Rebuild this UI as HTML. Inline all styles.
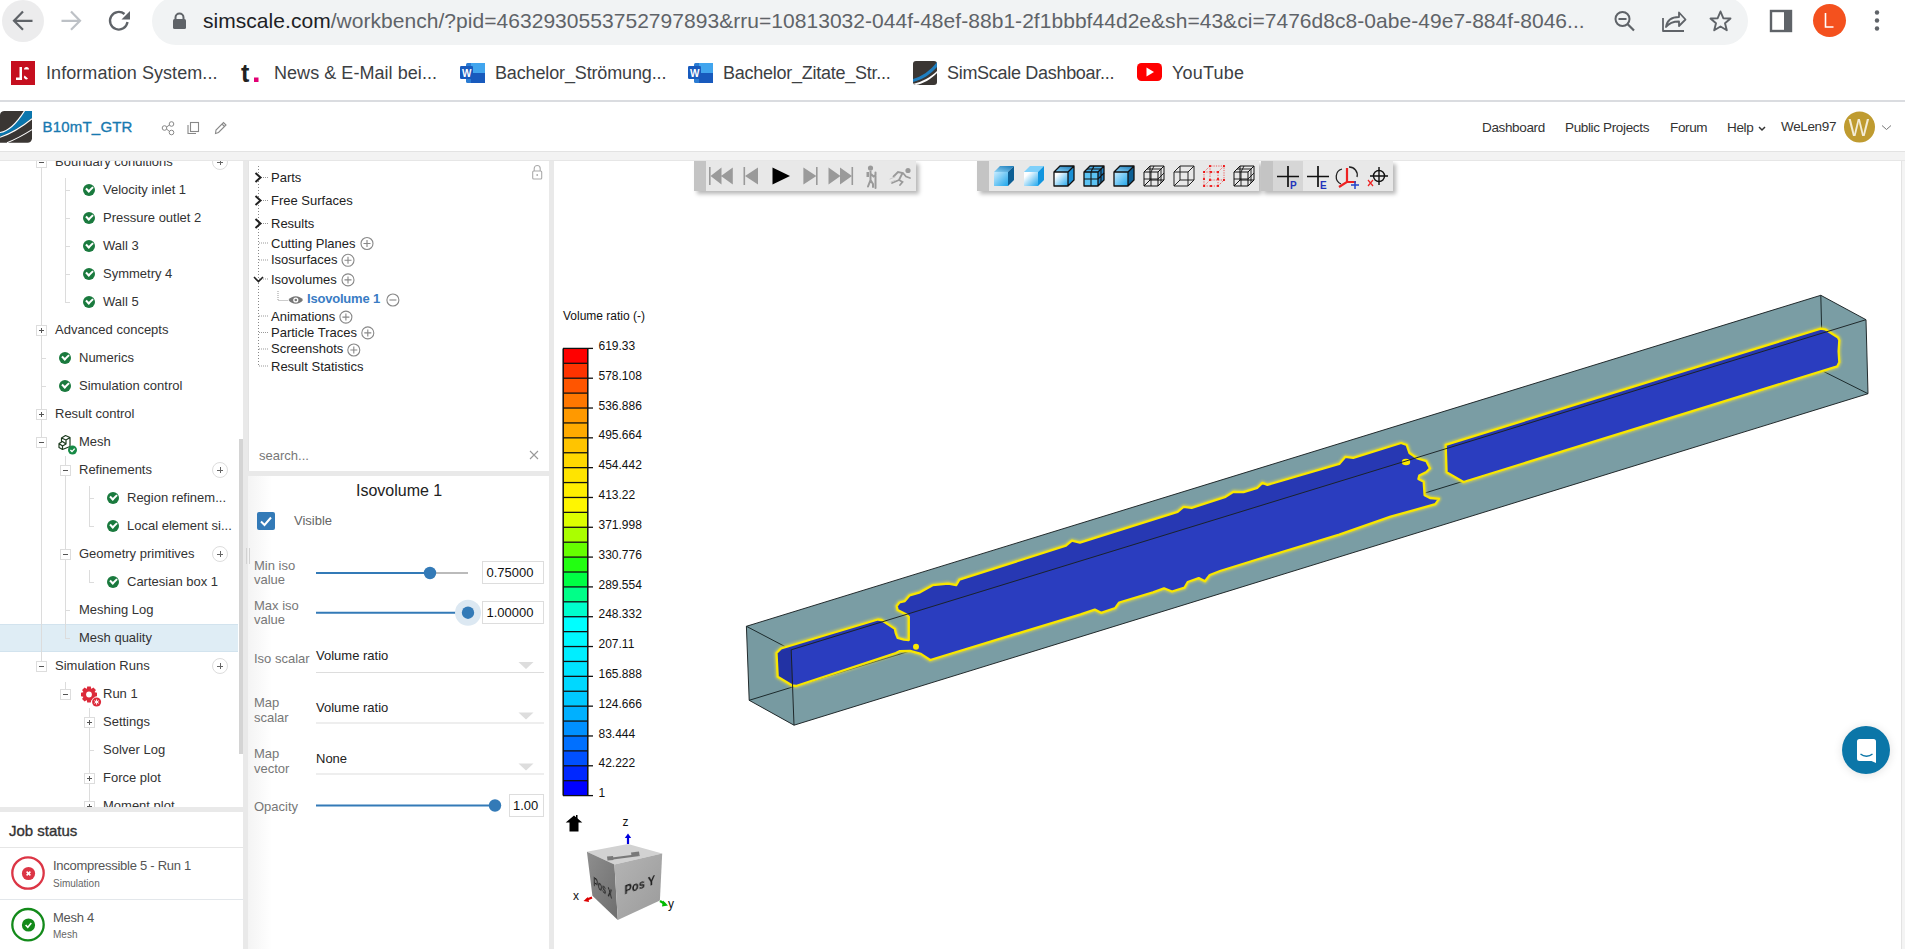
<!DOCTYPE html>
<html><head><meta charset="utf-8">
<style>
*{box-sizing:border-box;margin:0;padding:0}
html,body{width:1905px;height:949px;overflow:hidden;background:#fff;font-family:"Liberation Sans",sans-serif;position:relative}
.a{position:absolute}
.t{position:absolute;white-space:nowrap}
/* chrome */
#chrome{left:0;top:0;width:1905px;height:102px;background:#fff;border-bottom:2px solid #dadce0;z-index:2}
.omni{left:152px;top:-3px;width:1596px;height:48px;border-radius:24px;background:#f1f3f4}
.bm{font-size:18px;color:#3c4043;top:63px;letter-spacing:-0.3px}
/* simscale header */
#hdr{left:0;top:101px;width:1905px;height:51px;background:#fff;border-bottom:1px solid #e3e3e3}
.nav{font-size:13.5px;color:#333;top:19px;letter-spacing:-0.35px}
/* panels */
#gray{left:0;top:152px;width:1905px;height:797px;background:#e9e9e9}
.panel{background:#fff}
.tr{font-size:13px;color:#333;letter-spacing:0px}
.ck{width:12px;height:12px;border-radius:50%;background:#1a7a3e}
.ck:after{content:"";position:absolute;left:3px;top:2.5px;width:5px;height:3px;border-left:2px solid #fff;border-bottom:2px solid #fff;transform:rotate(-45deg)}
.exp{width:11px;height:11px;border:1px solid #ddd;background:#fff}
.exp:before{content:"";position:absolute;left:2px;top:4px;width:5px;height:1px;background:#555}
.exp.p:after{content:"";position:absolute;left:4px;top:2px;width:1px;height:5px;background:#555}
.plus{width:16px;height:16px;border-radius:50%;border:1px solid #ddd;background:#fff}
.plus:before{content:"";position:absolute;left:4px;top:7px;width:6px;height:1px;background:#666}
.plus:after{content:"";position:absolute;left:7px;top:4px;width:1px;height:6px;background:#666}
.vl{width:1px;background:#dcdcdc}
.hl{height:1px;background:#dcdcdc}
.mt{font-size:13px;color:#222}
.lab{font-size:13px;color:#777;line-height:14.6px}
.lg{font-size:12px;color:#111}
</style></head><body>
<div id="chrome" class="a">
 <div class="a" style="left:2px;top:0px;width:42px;height:42px;border-radius:50%;background:#ececed"></div>
 <svg class="a" style="left:0;top:0" width="150" height="45">
  <path d="M32.5 20.8H15M23 11.5L14 20.8L23 29.8" fill="none" stroke="#5f6368" stroke-width="2.2"/>
  <path d="M61.5 20.8H79M71 11.5L80 20.8L71 29.8" fill="none" stroke="#bdc1c6" stroke-width="2.2"/>
  <path d="M127.5 22A8.8 8.8 0 1 1 124.5 14" fill="none" stroke="#5f6368" stroke-width="2.3"/>
  <path d="M130 11V19.5H121.5Z" fill="#5f6368"/>
 </svg>
 <div class="a omni"></div>
 <svg class="a" style="left:165px;top:10px" width="30" height="24">
  <path d="M10.5 9.5V7.5A4 4 0 0 1 18.5 7.5V9.5" fill="none" stroke="#5f6368" stroke-width="2"/>
  <rect x="8" y="9" width="13" height="10" rx="1.5" fill="#5f6368"/>
 </svg>
 <div class="t" style="left:203px;top:9px;font-size:21px;color:#5f6368;letter-spacing:0.04px"><span style="color:#202124">simscale.com</span>/workbench/?pid=4632930553752797893&amp;rru=10813032-044f-48ef-88b1-2f1bbbf44d2e&amp;sh=43&amp;ci=7476d8c8-0abe-49e7-884f-8046...</div>
 <svg class="a" style="left:1600px;top:0" width="305" height="45">
  <circle cx="22.5" cy="19" r="7" fill="none" stroke="#5f6368" stroke-width="2"/>
  <path d="M18.5 19H26.5M27.5 24L34 30.5" stroke="#5f6368" stroke-width="2.2" fill="none"/>
  <path d="M63 18V31H84M66 27C67 20 72 17 79 17V12.5L85.5 19.5L79 26V21.5C73 21.5 69 23 66 27Z" fill="none" stroke="#5f6368" stroke-width="1.8" stroke-linejoin="round"/>
  <path d="M120.5 11.5L123.3 18.2L130.5 18.5L125 23.3L126.8 30.3L120.5 26.5L114.2 30.3L116 23.3L110.5 18.5L117.7 18.2Z" fill="none" stroke="#5f6368" stroke-width="1.9" stroke-linejoin="round"/>
  <rect x="171" y="11" width="20" height="20" fill="none" stroke="#5f6368" stroke-width="2.4"/>
  <rect x="184" y="11" width="8" height="20" fill="#5f6368"/>
  <circle cx="229.5" cy="20.5" r="16.5" fill="#f4511e"/>
  <path d="M225.5 13V27H233.5" fill="none" stroke="#fff" stroke-width="1.6"/>
  <circle cx="277" cy="12.5" r="2.2" fill="#5f6368"/><circle cx="277" cy="20.5" r="2.2" fill="#5f6368"/><circle cx="277" cy="28.5" r="2.2" fill="#5f6368"/>
 </svg>
 <!-- bookmarks -->
 <svg class="a" style="left:0;top:55px" width="1260" height="40">
  <rect x="11" y="6" width="24" height="24" fill="#c50f1f"/>
  <path d="M16 25H22V12H19.5V22.5H16Z M24 14.5A2.5 2.5 0 0 1 29 14.5H24Z M24.5 20.5L28 23.5A2 2 0 0 1 24.5 20.5Z" fill="#fff"/>
  <text x="241" y="27" font-size="25" font-weight="bold" fill="#222" font-family="Liberation Sans">t</text>
  <rect x="254" y="22.5" width="4.5" height="4.5" fill="#e20074"/>
  <rect x="466" y="8" width="18" height="20" rx="1.5" fill="#2b7cd3"/>
  <rect x="471" y="8" width="14" height="10" fill="#41a5ee"/>
  <rect x="471" y="18" width="14" height="10" fill="#185abd"/>
  <rect x="460" y="11" width="13" height="13" rx="1.2" fill="#185abd"/>
  <text x="462" y="22" font-size="10" font-weight="bold" fill="#fff" font-family="Liberation Sans">W</text>
  <rect x="694" y="8" width="18" height="20" rx="1.5" fill="#2b7cd3"/>
  <rect x="699" y="8" width="14" height="10" fill="#41a5ee"/>
  <rect x="699" y="18" width="14" height="10" fill="#185abd"/>
  <rect x="688" y="11" width="13" height="13" rx="1.2" fill="#185abd"/>
  <text x="690" y="22" font-size="10" font-weight="bold" fill="#fff" font-family="Liberation Sans">W</text>
  <rect x="913" y="6" width="24" height="24" rx="3" fill="#3a3633"/>
  <path d="M913 24C921 22 930 16 937 7V12C931 19 922 25 913 27Z" fill="#1f7fc0"/>
  <path d="M913 29C922 27 931 22 937 16V18C931 24 923 29 916 30Z" fill="#fff"/>
  <rect x="1137" y="8" width="25" height="18" rx="4.5" fill="#ff0000"/>
  <path d="M1146.5 12.5L1154 17L1146.5 21.5Z" fill="#fff"/>
 </svg>
 <div class="t bm" style="left:46px;letter-spacing:0.07px">Information System...</div>
 <div class="t bm" style="left:274px;letter-spacing:0.05px">News &amp; E-Mail bei...</div>
 <div class="t bm" style="left:495px;letter-spacing:-0.14px">Bachelor_Strömung...</div>
 <div class="t bm" style="left:723px;letter-spacing:-0.25px">Bachelor_Zitate_Str...</div>
 <div class="t bm" style="left:947px">SimScale Dashboar...</div>
 <div class="t bm" style="left:1172px;letter-spacing:0.2px">YouTube</div>
</div>
<div id="hdr" class="a">
 <svg class="a" style="left:0;top:9px" width="34" height="34">
  <path d="M0 4.5Q0.5 0.9 4.5 0.9H32V28.2A4.5 4.5 0 0 1 27.5 32.7H0Z" fill="#3a3633"/>
  <path d="M24.7 0.9H32V7.9Q16 21 0 26.5V22.5Q11.9 20.9 24.7 0.9Z" fill="#0b76ad"/>
  <path d="M24.5 0.9Q11.9 20.9 0 22.5" fill="none" stroke="#fff" stroke-width="1.1"/>
  <path d="M32 8.7Q16 21.8 0 27.3" fill="none" stroke="#fff" stroke-width="1.1"/>
  <path d="M32 19.6Q19 27.9 7 32.7" fill="none" stroke="#fff" stroke-width="1.1"/>
 </svg>
 <div class="t" style="left:42.5px;top:17px;font-size:15px;color:#1879b0;letter-spacing:0.2px;-webkit-text-stroke:0.35px #1879b0">B10mT_GTR</div>
 <svg class="a" style="left:155px;top:15px" width="80" height="24">
  <circle cx="16.5" cy="8" r="2.3" fill="none" stroke="#888" stroke-width="1"/>
  <circle cx="9.5" cy="12" r="2.3" fill="none" stroke="#888" stroke-width="1"/>
  <circle cx="16.5" cy="16.5" r="2.3" fill="none" stroke="#888" stroke-width="1"/>
  <path d="M11.5 11L14.5 9M11.5 13L14.5 15.5" stroke="#888" stroke-width="1"/>
  <rect x="35.5" y="6.5" width="8" height="9" fill="none" stroke="#888" stroke-width="1.1"/>
  <path d="M33 9V17.5H41" fill="none" stroke="#888" stroke-width="1.1"/>
  <path d="M60.5 17.5L61 14L68.5 6.5L71 9L63.5 16.5Z M67 8L69.5 10.5" fill="none" stroke="#888" stroke-width="1.1"/>
 </svg>
 <div class="t nav" style="left:1482px">Dashboard</div>
 <div class="t nav" style="left:1565px">Public Projects</div>
 <div class="t nav" style="left:1670px">Forum</div>
 <div class="t nav" style="left:1727px">Help</div>
 <svg class="a" style="left:1755px;top:5px" width="150" height="40">
  <path d="M4 21L7 24L10 21" fill="none" stroke="#333" stroke-width="1.5"/>
  <circle cx="104.5" cy="21" r="15.5" fill="#bf9b30"/>
  <path d="M127 19.5L131.5 23.5L136 19.5" fill="none" stroke="#777" stroke-width="1"/>
 </svg>
 <div class="t nav" style="left:1781px;top:17.5px">WeLen97</div>
 <div class="t" style="left:1847.5px;top:14px;font-size:23px;color:#f3ecd6;transform:scaleX(0.95)">W</div>
</div>
<div id="gray" class="a"></div>
<!-- left panel -->
<div class="a panel" style="left:0;top:160px;width:243px;height:647px;overflow:hidden" id="lp">
<div class="a" style="left:0;top:463.5px;width:238px;height:28px;background:#dfedf5;border-top:1px solid #d2e3ee;border-bottom:1px solid #d2e3ee"></div>
<div class="a vl" style="left:41px;top:0.0px;height:500.5px"></div>
<div class="a vl" style="left:65px;top:17.5px;height:125.0px"></div>
<div class="a hl" style="left:65px;top:29.5px;width:5px"></div>
<div class="a hl" style="left:65px;top:57.5px;width:5px"></div>
<div class="a hl" style="left:65px;top:85.5px;width:5px"></div>
<div class="a hl" style="left:65px;top:113.5px;width:5px"></div>
<div class="a hl" style="left:65px;top:141.5px;width:5px"></div>
<div class="a hl" style="left:41px;top:197.5px;width:5px"></div>
<div class="a hl" style="left:41px;top:225.5px;width:5px"></div>
<div class="a vl" style="left:65px;top:295.5px;height:183.0px"></div>
<div class="a hl" style="left:65px;top:449.5px;width:5px"></div>
<div class="a hl" style="left:65px;top:477.5px;width:5px"></div>
<div class="a vl" style="left:89px;top:325.5px;height:41.0px"></div>
<div class="a hl" style="left:89px;top:337.5px;width:5px"></div>
<div class="a hl" style="left:89px;top:365.5px;width:5px"></div>
<div class="a vl" style="left:89px;top:409.5px;height:13.0px"></div>
<div class="a hl" style="left:89px;top:421.5px;width:5px"></div>
<div class="a vl" style="left:65px;top:521.5px;height:7.0px"></div>
<div class="a vl" style="left:89px;top:547.5px;height:112.5px"></div>
<div class="a hl" style="left:89px;top:589.5px;width:5px"></div>
<div class="a exp" style="left:36px;top:-3.3px"></div>
<div class="t tr" style="left:55px;top:-12.5px;line-height:28px">Boundary conditions</div>
<div class="a plus" style="left:211.5px;top:-6.0px"></div>
<div class="a ck" style="left:83px;top:23.5px"></div>
<div class="t tr" style="left:103px;top:15.5px;line-height:28px">Velocity inlet 1</div>
<div class="a ck" style="left:83px;top:51.5px"></div>
<div class="t tr" style="left:103px;top:43.5px;line-height:28px">Pressure outlet 2</div>
<div class="a ck" style="left:83px;top:79.5px"></div>
<div class="t tr" style="left:103px;top:71.5px;line-height:28px">Wall 3</div>
<div class="a ck" style="left:83px;top:107.5px"></div>
<div class="t tr" style="left:103px;top:99.5px;line-height:28px">Symmetry 4</div>
<div class="a ck" style="left:83px;top:135.5px"></div>
<div class="t tr" style="left:103px;top:127.5px;line-height:28px">Wall 5</div>
<div class="a exp p" style="left:36px;top:164.7px"></div>
<div class="t tr" style="left:55px;top:155.5px;line-height:28px">Advanced concepts</div>
<div class="a ck" style="left:59px;top:191.5px"></div>
<div class="t tr" style="left:79px;top:183.5px;line-height:28px">Numerics</div>
<div class="a ck" style="left:59px;top:219.5px"></div>
<div class="t tr" style="left:79px;top:211.5px;line-height:28px">Simulation control</div>
<div class="a exp p" style="left:36px;top:248.7px"></div>
<div class="t tr" style="left:55px;top:239.5px;line-height:28px">Result control</div>
<div class="a exp" style="left:36px;top:276.7px"></div>
<svg class="a" style="left:58px;top:269.5px" width="22" height="26"><path d="M3.5 8L7.5 5.5L12 7.5L8 10Z M3.5 8V12M8 10V14M12 7.5V16.5M1 13.5L4.5 11.5L8 14L4.5 16Z M1 13.5V17.5L4.5 19.5L12 16.5M4.5 16V19.5" fill="none" stroke="#1d3b1f" stroke-width="1.2" stroke-linejoin="round"/><circle cx="14.5" cy="20" r="4.5" fill="#168a45"/><path d="M12.4 20L14 21.6L16.7 18.6" fill="none" stroke="#fff" stroke-width="1.4"/></svg>
<div class="t tr" style="left:79px;top:267.5px;line-height:28px">Mesh</div>
<div class="a exp" style="left:60px;top:304.7px"></div>
<div class="t tr" style="left:79px;top:295.5px;line-height:28px">Refinements</div>
<div class="a plus" style="left:211.5px;top:302.0px"></div>
<div class="a ck" style="left:107px;top:331.5px"></div>
<div class="t tr" style="left:127px;top:323.5px;line-height:28px">Region refinem...</div>
<div class="a ck" style="left:107px;top:359.5px"></div>
<div class="t tr" style="left:127px;top:351.5px;line-height:28px">Local element si...</div>
<div class="a exp" style="left:60px;top:388.7px"></div>
<div class="t tr" style="left:79px;top:379.5px;line-height:28px">Geometry primitives</div>
<div class="a plus" style="left:211.5px;top:386.0px"></div>
<div class="a ck" style="left:107px;top:415.5px"></div>
<div class="t tr" style="left:127px;top:407.5px;line-height:28px">Cartesian box 1</div>
<div class="t tr" style="left:79px;top:435.5px;line-height:28px">Meshing Log</div>
<div class="t tr" style="left:79px;top:463.5px;line-height:28px">Mesh quality</div>
<div class="a exp" style="left:36px;top:500.7px"></div>
<div class="t tr" style="left:55px;top:491.5px;line-height:28px">Simulation Runs</div>
<div class="a plus" style="left:211.5px;top:498.0px"></div>
<div class="a exp" style="left:60px;top:528.7px"></div>
<svg class="a" style="left:78px;top:521.5px" width="30" height="28"><g transform="translate(11 12.5)"><path d="M5.80 -2.18 L8.00 -1.79 L8.00 1.79 L5.80 2.18 L5.65 2.56 L6.92 4.39 L4.39 6.92 L2.56 5.65 L2.18 5.80 L1.79 8.00 L-1.79 8.00 L-2.18 5.80 L-2.56 5.65 L-4.39 6.92 L-6.92 4.39 L-5.65 2.56 L-5.80 2.18 L-8.00 1.79 L-8.00 -1.79 L-5.80 -2.18 L-5.65 -2.56 L-6.92 -4.39 L-4.39 -6.92 L-2.56 -5.65 L-2.18 -5.80 L-1.79 -8.00 L1.79 -8.00 L2.18 -5.80 L2.56 -5.65 L4.39 -6.92 L6.92 -4.39 L5.65 -2.56Z" fill="#dc2a3a"/><circle r="2.9" fill="#fff"/></g><circle cx="18.6" cy="20" r="5.2" fill="#fff"/><circle cx="18.6" cy="20" r="4.5" fill="#dc2a3a"/><g transform="translate(18.6 20) rotate(90)"><path d="M2.60 0.00L-2.60 -0.00M1.30 2.25L-1.30 -2.25M-1.30 2.25L1.30 -2.25" stroke="#fff" stroke-width="1"/></g></svg>
<div class="t tr" style="left:103px;top:519.5px;line-height:28px">Run 1</div>
<div class="a exp p" style="left:84px;top:556.7px"></div>
<div class="t tr" style="left:103px;top:547.5px;line-height:28px">Settings</div>
<div class="t tr" style="left:103px;top:575.5px;line-height:28px">Solver Log</div>
<div class="a exp p" style="left:84px;top:612.7px"></div>
<div class="t tr" style="left:103px;top:603.5px;line-height:28px">Force plot</div>
<div class="a exp p" style="left:84px;top:640.7px"></div>
<div class="t tr" style="left:103px;top:631.5px;line-height:28px">Moment plot</div>
<div class="a" style="left:239px;top:279px;width:4px;height:315px;background:#d4d4d4"></div>
</div>
<div class="a panel" style="left:0;top:812px;width:243px;height:137px"></div>
<!-- middle -->
<div class="a panel" style="left:248px;top:160px;width:301px;height:311px"></div>
<div class="a panel" style="left:248px;top:476px;width:301px;height:473px"></div>
<!-- viewport -->
<div class="a panel" style="left:554px;top:160px;width:1347px;height:789px"></div>
<!-- job status -->
<div class="t" style="left:9px;top:822px;font-size:15px;color:#333;letter-spacing:0px;-webkit-text-stroke:0.35px #333">Job status</div>
<div class="a" style="left:0;top:847px;width:243px;height:1px;background:#e6e6e6"></div>
<div class="a" style="left:0;top:899px;width:243px;height:1px;background:#e3e7eb"></div>
<svg class="a" style="left:0;top:850px" width="50" height="99">
 <circle cx="28" cy="23" r="15.7" fill="none" stroke="#dc3545" stroke-width="2.3"/>
 <circle cx="28.5" cy="23.5" r="6.6" fill="#dc3545"/>
 <path d="M26.6 21.6L30.4 25.4M30.4 21.6L26.6 25.4" stroke="#fff" stroke-width="1.5"/>
 <circle cx="28" cy="74.7" r="15.7" fill="none" stroke="#138a1a" stroke-width="2.3"/>
 <circle cx="28.5" cy="75" r="6.6" fill="#138a1a"/>
 <path d="M25.6 75L27.8 77.2L31.3 73" fill="none" stroke="#fff" stroke-width="1.6"/>
</svg>
<div class="t" style="left:53px;top:858px;font-size:13px;color:#555;letter-spacing:-0.27px">Incompressible 5 - Run 1</div>
<div class="t" style="left:53px;top:878px;font-size:10px;color:#666">Simulation</div>
<div class="t" style="left:53px;top:910px;font-size:13px;color:#555;letter-spacing:-0.27px">Mesh 4</div>
<div class="t" style="left:53px;top:929px;font-size:10px;color:#666">Mesh</div>
<!-- middle tree -->
<div class="a" style="left:248px;top:160px;width:1px;height:311px;background:#e4e4e4"></div>
<svg class="a" style="left:248px;top:160px" width="301" height="311">
 <g stroke="#888" stroke-width="1" stroke-dasharray="1 2" fill="none">
  <path d="M10.5 6V207"/>
 </g>
 <g stroke="#999" stroke-width="1" stroke-dasharray="1 1" fill="none">
  <path d="M11 17.5H20M11 40.5H20M11 63.5H20M11 83H20M11 100H20M11 119H20M11 156H20M11 172.5H20M11 189H20M11 206H20"/>
  <path d="M30 131V140.5H40"/>
 </g>
 <path d="M7.5 13L12.5 17.5L7.5 22M7.5 36L12.5 40.5L7.5 45M7.5 59L12.5 63.5L7.5 68" fill="none" stroke="#222" stroke-width="2"/>
 <path d="M6 117L10.5 121.5L15 117" fill="none" stroke="#222" stroke-width="1.6"/>
 <g fill="none" stroke="#888" stroke-width="1.1">
  <circle cx="119" cy="83.5" r="6"/><path d="M115.5 83.5H122.5M119 80V87"/>
  <circle cx="100" cy="100.3" r="6"/><path d="M96.5 100.3H103.5M100 96.8V103.8"/>
  <circle cx="100" cy="119.9" r="6"/><path d="M96.5 119.9H103.5M100 116.4V123.4"/>
  <circle cx="144.9" cy="140" r="6"/><path d="M141.4 140H148.4"/>
  <circle cx="97.9" cy="157.1" r="6"/><path d="M94.4 157.1H101.4M97.9 153.6V160.6"/>
  <circle cx="119.8" cy="172.9" r="6"/><path d="M116.3 172.9H123.3M119.8 169.4V176.4"/>
  <circle cx="105.8" cy="190" r="6"/><path d="M102.3 190H109.3M105.8 186.5V193.5"/>
 </g>
 <path d="M40.5 140C44 135 51.5 135 55 140C51.5 145 44 145 40.5 140Z" fill="#777"/>
 <circle cx="47.8" cy="140" r="2.6" fill="#fff"/><circle cx="47.8" cy="140" r="1.3" fill="#777"/>
 <g fill="none" stroke="#aaa" stroke-width="1.1"><path d="M286.2 11V8.5A3 3 0 0 1 292.2 8.5V11"/><rect x="284.7" y="11" width="9" height="8" rx="1"/></g>
 <circle cx="289.2" cy="15" r="0.9" fill="#aaa"/>
 <path d="M282 291L290 299M290 291L282 299" stroke="#999" stroke-width="1.1"/>
</svg>
<div class="t mt" style="left:271px;top:170px">Parts</div>
<div class="t mt" style="left:271px;top:193px">Free Surfaces</div>
<div class="t mt" style="left:271px;top:216px">Results</div>
<div class="t mt" style="left:271px;top:235.5px">Cutting Planes</div>
<div class="t mt" style="left:271px;top:252.4px">Isosurfaces</div>
<div class="t mt" style="left:271px;top:271.6px">Isovolumes</div>
<div class="t mt" style="left:307px;top:291.4px;color:#3a7cc4;font-weight:bold;letter-spacing:-0.2px">Isovolume 1</div>
<div class="t mt" style="left:271px;top:308.5px">Animations</div>
<div class="t mt" style="left:271px;top:325px">Particle Traces</div>
<div class="t mt" style="left:271px;top:341.4px">Screenshots</div>
<div class="t mt" style="left:271px;top:358.5px">Result Statistics</div>
<div class="t" style="left:259px;top:447.5px;font-size:13px;color:#777">search...</div>
<!-- properties -->
<div class="a" style="left:248px;top:476px;width:24px;height:473px;background:linear-gradient(90deg,#f4f4f4,#fff)"></div>
<div class="a" style="left:246px;top:548px;width:1px;height:16px;background:#d2d2d2"></div><div class="a" style="left:249px;top:548px;width:1px;height:16px;background:#d2d2d2"></div>
<div class="t" style="left:356px;top:481.5px;font-size:16px;color:#222">Isovolume 1</div>
<div class="a" style="left:257px;top:512px;width:18px;height:18px;border-radius:2px;background:#337ab7"></div>
<svg class="a" style="left:257px;top:512px" width="18" height="18"><path d="M4 9.5L7.5 13L14 5.5" fill="none" stroke="#fff" stroke-width="2"/></svg>
<div class="t" style="left:294px;top:512.8px;font-size:13px;color:#666">Visible</div>
<div class="t lab" style="left:254px;top:558.8px">Min iso<br>value</div>
<div class="t lab" style="left:254px;top:598.6px">Max iso<br>value</div>
<div class="t lab" style="left:254px;top:651.8px">Iso scalar</div>
<div class="t lab" style="left:254px;top:696px">Map<br>scalar</div>
<div class="t lab" style="left:254px;top:747px">Map<br>vector</div>
<div class="t lab" style="left:254px;top:799.5px">Opacity</div>
<svg class="a" style="left:248px;top:476px" width="301" height="473">
 <path d="M68 97H182" stroke="#337ab7" stroke-width="2"/>
 <path d="M182 97H220" stroke="#bbb" stroke-width="2"/>
 <circle cx="182" cy="97" r="6.2" fill="#337ab7"/>
 <path d="M68 136.7H220" stroke="#337ab7" stroke-width="2"/>
 <circle cx="220" cy="136.7" r="13" fill="#dce8f2"/>
 <circle cx="220" cy="136.7" r="6.2" fill="#337ab7"/>
 <path d="M68 329.5H247" stroke="#337ab7" stroke-width="2"/>
 <circle cx="247" cy="329.5" r="6.2" fill="#337ab7"/>
 <rect x="234.5" y="85.5" width="61" height="22" fill="#fff" stroke="#ddd"/>
 <rect x="234.5" y="125.5" width="61" height="22" fill="#fff" stroke="#ddd"/>
 <rect x="261.5" y="318.5" width="34" height="22" fill="#fff" stroke="#ddd"/>
 <path d="M68 196.5H296M68 247H296M68 298H296" stroke="#ddd" stroke-width="1"/>
 <path d="M270.5 186H285.5L278 193Z M270.5 236.5H285.5L278 243.5Z M270.5 287.5H285.5L278 294.5Z" fill="#ddd"/>
</svg>
<div class="t" style="left:486.5px;top:564.7px;font-size:13px;color:#111">0.75000</div>
<div class="t" style="left:486.5px;top:604.8px;font-size:13px;color:#111">1.00000</div>
<div class="t" style="left:316px;top:648.3px;font-size:13px;color:#222">Volume ratio</div>
<div class="t" style="left:316px;top:699.5px;font-size:13px;color:#222">Volume ratio</div>
<div class="t" style="left:316px;top:750.7px;font-size:13px;color:#222">None</div>
<div class="t" style="left:513px;top:798px;font-size:13px;color:#111">1.00</div>
<!--TUBE-->
<svg class="a" style="left:0;top:0" width="1905" height="949">
<defs><filter id="gl" x="-5%" y="-5%" width="110%" height="110%"><feGaussianBlur stdDeviation="1.2"/></filter><clipPath id="cm"><path d="M776.5 653.0 L781.0 648.5 L877.9 619.5 L881.5 620.0 L894.9 628.9 L895.8 633.3 L897.6 637.8 L903.9 639.6 L908.8 640.0 L908.8 616.8 L906.6 614.5 L897.6 610.0 L896.7 606.0 L899.4 602.5 L904.8 601.1 L909.7 595.3 L920.0 592.3 L932.6 585.2 L948.3 583.6 L956.2 585.2 L959.4 579.7 L1065.9 545.7 L1071.9 540.7 L1079.9 542.7 L1177.6 511.8 L1183.6 506.8 L1191.6 507.8 L1225.5 496.8 L1233.5 491.8 L1243.5 492.2 L1257.4 487.8 L1262.4 482.9 L1267.4 484.9 L1339.2 463.9 L1345.2 456.9 L1353.2 457.9 L1401.1 443.0 L1406.7 445.0 L1409.4 453.0 L1417.5 458.5 L1426.4 461.2 L1430.0 468.4 L1426.4 472.0 L1419.3 475.5 L1418.4 479.0 L1423.7 481.8 L1424.6 495.2 L1430.0 498.0 L1439.0 498.8 L1435.4 504.2 L1390.6 516.7 L1339.2 534.7 L1255.4 560.0 L1220.0 571.0 L1209.8 575.0 L1205.0 581.3 L1198.7 578.1 L1187.7 582.0 L1184.6 587.6 L1172.0 591.5 L1164.0 588.3 L1153.0 592.3 L1119.2 602.5 L1115.3 608.0 L1101.1 612.8 L1094.8 609.6 L1080.6 614.3 L930.2 660.0 L920.9 653.9 L910.1 650.8 L899.4 651.2 L895.8 653.0 L796.0 686.0 L791.9 685.3 L777.7 676.8Z"/><path d="M1445.7 444.8 L1820.8 328.6 L1825.0 329.3 L1838.0 337.5 L1839.3 340.3 L1838.6 351.2 L1839.3 362.2 L1837.3 366.3 L1463.5 482.0 L1446.6 472.3Z"/></clipPath></defs>
<path d="M746.4 626.3 L1820.8 295.3 L1866.0 319.7 L1868.0 393.7 L794.0 725.2 L749.2 700.3Z" fill="#7a9da4"/>
<path d="M746.4 626.3 L791.2 649.8 L794.0 725.2 L749.2 700.3Z" fill="#6f9097" opacity="0.2"/>
<path d="M749.2 700.3L1822.7 371.0 M1820.8 295.3L1822.7 371.0 M1822.7 371.0L1868.0 393.7 M746.4 626.3L791.2 649.8" stroke="#1c2a2c" stroke-width="1" fill="none"/>
<path d="M776.5 653.0 L781.0 648.5 L877.9 619.5 L881.5 620.0 L894.9 628.9 L895.8 633.3 L897.6 637.8 L903.9 639.6 L908.8 640.0 L908.8 616.8 L906.6 614.5 L897.6 610.0 L896.7 606.0 L899.4 602.5 L904.8 601.1 L909.7 595.3 L920.0 592.3 L932.6 585.2 L948.3 583.6 L956.2 585.2 L959.4 579.7 L1065.9 545.7 L1071.9 540.7 L1079.9 542.7 L1177.6 511.8 L1183.6 506.8 L1191.6 507.8 L1225.5 496.8 L1233.5 491.8 L1243.5 492.2 L1257.4 487.8 L1262.4 482.9 L1267.4 484.9 L1339.2 463.9 L1345.2 456.9 L1353.2 457.9 L1401.1 443.0 L1406.7 445.0 L1409.4 453.0 L1417.5 458.5 L1426.4 461.2 L1430.0 468.4 L1426.4 472.0 L1419.3 475.5 L1418.4 479.0 L1423.7 481.8 L1424.6 495.2 L1430.0 498.0 L1439.0 498.8 L1435.4 504.2 L1390.6 516.7 L1339.2 534.7 L1255.4 560.0 L1220.0 571.0 L1209.8 575.0 L1205.0 581.3 L1198.7 578.1 L1187.7 582.0 L1184.6 587.6 L1172.0 591.5 L1164.0 588.3 L1153.0 592.3 L1119.2 602.5 L1115.3 608.0 L1101.1 612.8 L1094.8 609.6 L1080.6 614.3 L930.2 660.0 L920.9 653.9 L910.1 650.8 L899.4 651.2 L895.8 653.0 L796.0 686.0 L791.9 685.3 L777.7 676.8Z M1445.7 444.8 L1820.8 328.6 L1825.0 329.3 L1838.0 337.5 L1839.3 340.3 L1838.6 351.2 L1839.3 362.2 L1837.3 366.3 L1463.5 482.0 L1446.6 472.3Z" fill="none" stroke="#e8de40" stroke-width="4.5" stroke-linejoin="round" filter="url(#gl)" opacity="0.6"/>
<path d="M776.5 653.0 L781.0 648.5 L877.9 619.5 L881.5 620.0 L894.9 628.9 L895.8 633.3 L897.6 637.8 L903.9 639.6 L908.8 640.0 L908.8 616.8 L906.6 614.5 L897.6 610.0 L896.7 606.0 L899.4 602.5 L904.8 601.1 L909.7 595.3 L920.0 592.3 L932.6 585.2 L948.3 583.6 L956.2 585.2 L959.4 579.7 L1065.9 545.7 L1071.9 540.7 L1079.9 542.7 L1177.6 511.8 L1183.6 506.8 L1191.6 507.8 L1225.5 496.8 L1233.5 491.8 L1243.5 492.2 L1257.4 487.8 L1262.4 482.9 L1267.4 484.9 L1339.2 463.9 L1345.2 456.9 L1353.2 457.9 L1401.1 443.0 L1406.7 445.0 L1409.4 453.0 L1417.5 458.5 L1426.4 461.2 L1430.0 468.4 L1426.4 472.0 L1419.3 475.5 L1418.4 479.0 L1423.7 481.8 L1424.6 495.2 L1430.0 498.0 L1439.0 498.8 L1435.4 504.2 L1390.6 516.7 L1339.2 534.7 L1255.4 560.0 L1220.0 571.0 L1209.8 575.0 L1205.0 581.3 L1198.7 578.1 L1187.7 582.0 L1184.6 587.6 L1172.0 591.5 L1164.0 588.3 L1153.0 592.3 L1119.2 602.5 L1115.3 608.0 L1101.1 612.8 L1094.8 609.6 L1080.6 614.3 L930.2 660.0 L920.9 653.9 L910.1 650.8 L899.4 651.2 L895.8 653.0 L796.0 686.0 L791.9 685.3 L777.7 676.8Z M1445.7 444.8 L1820.8 328.6 L1825.0 329.3 L1838.0 337.5 L1839.3 340.3 L1838.6 351.2 L1839.3 362.2 L1837.3 366.3 L1463.5 482.0 L1446.6 472.3Z" fill="#2a3dbf"/>
<path d="M700.0 0.0 L1905.0 0.0 L1905.0 307.7 L700.0 677.8Z" fill="#2535aa" opacity="0.55" clip-path="url(#cm)"/>
<path d="M777.5 652.0 L791.5 648.0 L793.0 685.3 L778.5 676.8Z" fill="#2232a4"/>
<path d="M776.5 653.0 L781.0 648.5 L877.9 619.5 L881.5 620.0 L894.9 628.9 L895.8 633.3 L897.6 637.8 L903.9 639.6 L908.8 640.0 L908.8 616.8 L906.6 614.5 L897.6 610.0 L896.7 606.0 L899.4 602.5 L904.8 601.1 L909.7 595.3 L920.0 592.3 L932.6 585.2 L948.3 583.6 L956.2 585.2 L959.4 579.7 L1065.9 545.7 L1071.9 540.7 L1079.9 542.7 L1177.6 511.8 L1183.6 506.8 L1191.6 507.8 L1225.5 496.8 L1233.5 491.8 L1243.5 492.2 L1257.4 487.8 L1262.4 482.9 L1267.4 484.9 L1339.2 463.9 L1345.2 456.9 L1353.2 457.9 L1401.1 443.0 L1406.7 445.0 L1409.4 453.0 L1417.5 458.5 L1426.4 461.2 L1430.0 468.4 L1426.4 472.0 L1419.3 475.5 L1418.4 479.0 L1423.7 481.8 L1424.6 495.2 L1430.0 498.0 L1439.0 498.8 L1435.4 504.2 L1390.6 516.7 L1339.2 534.7 L1255.4 560.0 L1220.0 571.0 L1209.8 575.0 L1205.0 581.3 L1198.7 578.1 L1187.7 582.0 L1184.6 587.6 L1172.0 591.5 L1164.0 588.3 L1153.0 592.3 L1119.2 602.5 L1115.3 608.0 L1101.1 612.8 L1094.8 609.6 L1080.6 614.3 L930.2 660.0 L920.9 653.9 L910.1 650.8 L899.4 651.2 L895.8 653.0 L796.0 686.0 L791.9 685.3 L777.7 676.8Z M1445.7 444.8 L1820.8 328.6 L1825.0 329.3 L1838.0 337.5 L1839.3 340.3 L1838.6 351.2 L1839.3 362.2 L1837.3 366.3 L1463.5 482.0 L1446.6 472.3Z" fill="none" stroke="#f8e600" stroke-width="2.3" stroke-linejoin="round"/>
<circle cx="916" cy="646.8" r="3" fill="#fbe800"/><ellipse cx="1406" cy="462" rx="4.2" ry="3.2" fill="#fbe800"/>
<path d="M746.4 626.3L1820.8 295.3 M1820.8 295.3L1866.0 319.7 M1866.0 319.7L1868.0 393.7 M1868.0 393.7L794.0 725.2 M746.4 626.3L749.2 700.3 M749.2 700.3L794.0 725.2 M791.2 649.8L794.0 725.2 M791.2 649.8L1866.0 319.7" stroke="#1a2224" stroke-width="0.95" fill="none"/>
</svg>
<!--/TUBE-->
<div class="a" style="left:0;top:151px;width:1905px;height:10px;background:#f3f3f3;border-top:1px solid #e3e3e3;border-bottom:1px solid #e6e6e6;z-index:1"></div>
<!--VP-->
<div class="a" style="left:694px;top:161px;width:222px;height:30px;background:#e8e8e8;box-shadow:3px 3px 4px rgba(0,0,0,0.28)"></div>
<div class="a" style="left:694px;top:161px;width:12px;height:30px;background:#c4c4c4"></div>
<div class="a" style="left:977px;top:161px;width:282px;height:30px;background:#e8e8e8;box-shadow:3px 3px 4px rgba(0,0,0,0.28)"></div>
<div class="a" style="left:977px;top:161px;width:12px;height:30px;background:#c4c4c4"></div>
<div class="a" style="left:1261px;top:161px;width:132px;height:30px;background:#e8e8e8;box-shadow:3px 3px 4px rgba(0,0,0,0.28)"></div>
<div class="a" style="left:1261px;top:161px;width:12px;height:30px;background:#c4c4c4"></div>
<div class="a" style="left:1273px;top:161px;width:30px;height:30px;background:#d6d6d6"></div>
<svg class="a" style="left:690px;top:155px" width="240" height="40">
 <g fill="#9a9a9a">
  <rect x="19" y="12" width="1.6" height="18"/><path d="M20.5 21L31.5 12.5V29.5Z M31 21L42.8 12.5V29.5Z"/>
  <rect x="53.5" y="12" width="1.6" height="18"/><path d="M55 21L68 12.5V29.5Z"/>
  <rect x="126" y="12" width="1.6" height="18"/><path d="M113.4 12.5L126.4 21L113.4 29.5Z"/>
  <rect x="161.5" y="12" width="1.6" height="18"/><path d="M138.5 12.5L150.5 21L138.5 29.5Z M150 12.5L162 21L150 29.5Z"/>
 </g>
 <path d="M82.5 12.5L100 21L82.5 29.5Z" fill="#000"/>
 <g fill="none" stroke="#9a9a9a" stroke-width="2" stroke-linecap="round">
  <circle cx="180.5" cy="13" r="1.6" fill="#9a9a9a"/>
  <path d="M180.5 16.5V25L178 31.5M180.5 25L183 29V32M180.5 18.5L183.5 21.5L185.5 20M185.5 17.5V33"/>
  <rect x="176.5" y="17" width="2.5" height="5" fill="#9a9a9a" stroke="none"/>
  <circle cx="218" cy="15.5" r="1.6" fill="#9a9a9a"/>
  <path d="M203.5 21.5L208 17L213 18L216 21.5L220 23M212 19L209 25L212.5 27L210 30M209 25L202 28" stroke-width="1.8"/>
  <path d="M200 24L205 22M201 27L205 25.5" stroke="#c8c8c8" stroke-width="1"/>
 </g>
</svg>
<svg class="a" style="left:0;top:0" width="1400" height="200"><defs>
<linearGradient id="gf" x1="0" y1="0" x2="1" y2="1"><stop offset="0" stop-color="#c9ecff"/><stop offset="1" stop-color="#1ea6ea"/></linearGradient>
<linearGradient id="gf2" x1="0" y1="0" x2="1" y2="1"><stop offset="0.2" stop-color="#ffffff"/><stop offset="1" stop-color="#21a8ee"/></linearGradient>
<linearGradient id="gt" x1="0" y1="1" x2="1" y2="0"><stop offset="0" stop-color="#8fd3f5"/><stop offset="1" stop-color="#1578b8"/></linearGradient>
</defs><path d="M994 172L1000 166H1014L1008 172Z" fill="url(#gt)"/><path d="M1008 172L1014 166V180L1008 186Z" fill="#0d5f94"/><rect x="994" y="172" width="14" height="14" fill="url(#gf)"/><path d="M1024 172L1030 166H1044L1038 172Z" fill="#7fd0fa"/><path d="M1038 172L1044 166V180L1038 186Z" fill="#1195de"/><rect x="1024" y="172" width="14" height="14" fill="url(#gf2)"/><path d="M1054 172L1060 166H1074L1068 172Z" fill="url(#gt)"/><path d="M1068 172L1074 166V180L1068 186Z" fill="#1a8fd4"/><rect x="1054" y="172" width="14" height="14" fill="url(#gf2)"/><path d="M1054 172L1060 166H1074V180L1068 186H1054Z M1054 172H1068V186 M1068 172L1074 166" fill="none" stroke="#111" stroke-width="1.3" stroke-linejoin="round" /><path d="M1084 172L1090 166H1104L1098 172Z" fill="#4aaee6"/><path d="M1098 172L1104 166V180L1098 186Z" fill="#1d7fc0"/><rect x="1084" y="172" width="14" height="14" fill="#5bc3f3"/><path d="M1084 172L1090 166H1104V180L1098 186H1084Z M1084 172H1098V186 M1098 172L1104 166" fill="none" stroke="#111" stroke-width="1.3" stroke-linejoin="round" /><path d="M1091 172V186 M1084 179H1098 M1087 169H1101 M1094 166L1091 172 M1101 169V183 M1098 179L1104 173" fill="none" stroke="#111" stroke-width="1.1"/><path d="M1114 172L1120 166H1134L1128 172Z" fill="url(#gt)"/><path d="M1128 172L1134 166V180L1128 186Z" fill="#0d5f94"/><rect x="1114" y="172" width="14" height="14" fill="url(#gf)"/><path d="M1114 172L1120 166H1134V180L1128 186H1114Z M1114 172H1128V186 M1128 172L1134 166" fill="none" stroke="#111" stroke-width="1.3" stroke-linejoin="round" /><path d="M1144 172L1150 166H1164V180L1158 186H1144Z M1144 172H1158V186 M1158 172L1164 166 M1144 186L1150 180H1164 M1150 166V180" fill="none" stroke="#111" stroke-width="1.0" stroke-linejoin="round" /><path d="M1151 172V186 M1144 179H1158 M1147 169H1161 M1154 166L1151 172 M1161 169V183 M1158 179L1164 173" fill="none" stroke="#111" stroke-width="0.9"/><path d="M1174 172L1180 166H1194V180L1188 186H1174Z M1174 172H1188V186 M1188 172L1194 166 M1174 186L1180 180H1194 M1180 166V180" fill="none" stroke="#222" stroke-width="1.0" stroke-linejoin="round" /><path d="M1204 172L1210 166H1224V180L1218 186H1204Z M1204 172H1218V186 M1218 172L1224 166 M1204 186L1210 180H1224 M1210 166V180" fill="none" stroke="#e33" stroke-width="0.8" stroke-linejoin="round" stroke-dasharray='1.2 1.2'/><circle cx="1204" cy="172" r="1.1" fill="#e00"/><circle cx="1218" cy="172" r="1.1" fill="#e00"/><circle cx="1210" cy="166" r="1.1" fill="#e00"/><circle cx="1224" cy="166" r="1.1" fill="#e00"/><circle cx="1204" cy="186" r="1.1" fill="#e00"/><circle cx="1218" cy="186" r="1.1" fill="#e00"/><circle cx="1224" cy="180" r="1.1" fill="#e00"/><circle cx="1210" cy="180" r="1.1" fill="#e00"/><circle cx="1211" cy="172" r="1.1" fill="#e00"/><circle cx="1204" cy="179" r="1.1" fill="#e00"/><circle cx="1218" cy="179" r="1.1" fill="#e00"/><circle cx="1211" cy="186" r="1.1" fill="#e00"/><path d="M1234 172L1240 166H1254V180L1248 186H1234Z M1234 172H1248V186 M1248 172L1254 166 M1234 186L1240 180H1254 M1240 166V180" fill="none" stroke="#111" stroke-width="1.0" stroke-linejoin="round" /><path d="M1241 172V186 M1234 179H1248 M1237 169H1251 M1244 166L1241 172 M1251 169V183 M1248 179L1254 173" fill="none" stroke="#111" stroke-width="0.9"/>
<path d="M1288 166V187M1277 176.5H1299" stroke="#111" stroke-width="1.7"/>
<text x="1290" y="189" font-size="10" font-weight="bold" fill="#2233bb" font-family="Liberation Sans">P</text>
<path d="M1318 166V187M1307 176.5H1329" stroke="#111" stroke-width="1.7"/>
<text x="1320" y="189" font-size="10" font-weight="bold" fill="#2233bb" font-family="Liberation Sans">E</text>
<path d="M1342 169A8 8 0 0 0 1341 184M1349 167A8 8 0 0 1 1357 177" fill="none" stroke="#222" stroke-width="1.3"/>
<path d="M1347 168V182L1339 187M1347 182H1356" fill="none" stroke="#e22" stroke-width="2.2"/>
<path d="M1351 185H1359M1355 181V189" stroke="#2244cc" stroke-width="1.5"/>
<circle cx="1379" cy="176" r="5.5" fill="none" stroke="#111" stroke-width="1.4"/>
<path d="M1379 167V185M1370 176H1388" stroke="#111" stroke-width="1.4"/>
<path d="M1368 180L1373 186M1373 180L1368 186" stroke="#e22" stroke-width="1.2"/>
</svg>
<div class="t lg" style="left:563px;top:309px">Volume ratio (-)</div>
<svg class="a" style="left:555px;top:330px" width="110" height="480"><rect x="8" y="18.40" width="25" height="15.21" fill="#ff0000"/><rect x="8" y="33.31" width="25" height="15.21" fill="#ff3300"/><rect x="8" y="48.21" width="25" height="15.21" fill="#ff5500"/><rect x="8" y="63.12" width="25" height="15.21" fill="#ff7700"/><rect x="8" y="78.03" width="25" height="15.21" fill="#ff9900"/><rect x="8" y="92.93" width="25" height="15.21" fill="#ffaa00"/><rect x="8" y="107.84" width="25" height="15.21" fill="#ffc400"/><rect x="8" y="122.75" width="25" height="15.21" fill="#ffd800"/><rect x="8" y="137.65" width="25" height="15.21" fill="#ffe400"/><rect x="8" y="152.56" width="25" height="15.21" fill="#ffee00"/><rect x="8" y="167.47" width="25" height="15.21" fill="#fff600"/><rect x="8" y="182.37" width="25" height="15.21" fill="#ddff00"/><rect x="8" y="197.28" width="25" height="15.21" fill="#aaff00"/><rect x="8" y="212.19" width="25" height="15.21" fill="#66ff00"/><rect x="8" y="227.09" width="25" height="15.21" fill="#22ff11"/><rect x="8" y="242.00" width="25" height="15.21" fill="#00ff44"/><rect x="8" y="256.91" width="25" height="15.21" fill="#00ff88"/><rect x="8" y="271.81" width="25" height="15.21" fill="#00ffcc"/><rect x="8" y="286.72" width="25" height="15.21" fill="#00ffff"/><rect x="8" y="301.63" width="25" height="15.21" fill="#00f8ff"/><rect x="8" y="316.53" width="25" height="15.21" fill="#00eeff"/><rect x="8" y="331.44" width="25" height="15.21" fill="#00e4ff"/><rect x="8" y="346.35" width="25" height="15.21" fill="#00d8ff"/><rect x="8" y="361.25" width="25" height="15.21" fill="#00c8ff"/><rect x="8" y="376.16" width="25" height="15.21" fill="#00b0ff"/><rect x="8" y="391.07" width="25" height="15.21" fill="#0090ff"/><rect x="8" y="405.97" width="25" height="15.21" fill="#0070ff"/><rect x="8" y="420.88" width="25" height="15.21" fill="#0050ff"/><rect x="8" y="435.79" width="25" height="15.21" fill="#0028ff"/><rect x="8" y="450.69" width="25" height="15.21" fill="#0000ff"/><path d="M8 18.40H33" stroke="#111" stroke-width="1.3"/><path d="M8 33.31H33" stroke="#111" stroke-width="1.3"/><path d="M8 48.21H33" stroke="#111" stroke-width="1.3"/><path d="M8 63.12H33" stroke="#111" stroke-width="1.3"/><path d="M8 78.03H33" stroke="#111" stroke-width="1.3"/><path d="M8 92.93H33" stroke="#111" stroke-width="1.3"/><path d="M8 107.84H33" stroke="#111" stroke-width="1.3"/><path d="M8 122.75H33" stroke="#111" stroke-width="1.3"/><path d="M8 137.65H33" stroke="#111" stroke-width="1.3"/><path d="M8 152.56H33" stroke="#111" stroke-width="1.3"/><path d="M8 167.47H33" stroke="#111" stroke-width="1.3"/><path d="M8 182.37H33" stroke="#111" stroke-width="1.3"/><path d="M8 197.28H33" stroke="#111" stroke-width="1.3"/><path d="M8 212.19H33" stroke="#111" stroke-width="1.3"/><path d="M8 227.09H33" stroke="#111" stroke-width="1.3"/><path d="M8 242.00H33" stroke="#111" stroke-width="1.3"/><path d="M8 256.91H33" stroke="#111" stroke-width="1.3"/><path d="M8 271.81H33" stroke="#111" stroke-width="1.3"/><path d="M8 286.72H33" stroke="#111" stroke-width="1.3"/><path d="M8 301.63H33" stroke="#111" stroke-width="1.3"/><path d="M8 316.53H33" stroke="#111" stroke-width="1.3"/><path d="M8 331.44H33" stroke="#111" stroke-width="1.3"/><path d="M8 346.35H33" stroke="#111" stroke-width="1.3"/><path d="M8 361.25H33" stroke="#111" stroke-width="1.3"/><path d="M8 376.16H33" stroke="#111" stroke-width="1.3"/><path d="M8 391.07H33" stroke="#111" stroke-width="1.3"/><path d="M8 405.97H33" stroke="#111" stroke-width="1.3"/><path d="M8 420.88H33" stroke="#111" stroke-width="1.3"/><path d="M8 435.79H33" stroke="#111" stroke-width="1.3"/><path d="M8 450.69H33" stroke="#111" stroke-width="1.3"/><path d="M8 465.60H33" stroke="#111" stroke-width="1.3"/><path d="M8.2 18.40V465.60M32.8 18.40V465.60" stroke="#111" stroke-width="1.5"/><path d="M33 18.40H38" stroke="#111" stroke-width="1.3"/><text x="43.5" y="20.00" font-size="12" fill="#111" font-family="Liberation Sans">619.33</text><path d="M33 48.21H38" stroke="#111" stroke-width="1.3"/><text x="43.5" y="49.81" font-size="12" fill="#111" font-family="Liberation Sans">578.108</text><path d="M33 78.03H38" stroke="#111" stroke-width="1.3"/><text x="43.5" y="79.63" font-size="12" fill="#111" font-family="Liberation Sans">536.886</text><path d="M33 107.84H38" stroke="#111" stroke-width="1.3"/><text x="43.5" y="109.44" font-size="12" fill="#111" font-family="Liberation Sans">495.664</text><path d="M33 137.65H38" stroke="#111" stroke-width="1.3"/><text x="43.5" y="139.25" font-size="12" fill="#111" font-family="Liberation Sans">454.442</text><path d="M33 167.47H38" stroke="#111" stroke-width="1.3"/><text x="43.5" y="169.07" font-size="12" fill="#111" font-family="Liberation Sans">413.22</text><path d="M33 197.28H38" stroke="#111" stroke-width="1.3"/><text x="43.5" y="198.88" font-size="12" fill="#111" font-family="Liberation Sans">371.998</text><path d="M33 227.09H38" stroke="#111" stroke-width="1.3"/><text x="43.5" y="228.69" font-size="12" fill="#111" font-family="Liberation Sans">330.776</text><path d="M33 256.91H38" stroke="#111" stroke-width="1.3"/><text x="43.5" y="258.51" font-size="12" fill="#111" font-family="Liberation Sans">289.554</text><path d="M33 286.72H38" stroke="#111" stroke-width="1.3"/><text x="43.5" y="288.32" font-size="12" fill="#111" font-family="Liberation Sans">248.332</text><path d="M33 316.53H38" stroke="#111" stroke-width="1.3"/><text x="43.5" y="318.13" font-size="12" fill="#111" font-family="Liberation Sans">207.11</text><path d="M33 346.35H38" stroke="#111" stroke-width="1.3"/><text x="43.5" y="347.95" font-size="12" fill="#111" font-family="Liberation Sans">165.888</text><path d="M33 376.16H38" stroke="#111" stroke-width="1.3"/><text x="43.5" y="377.76" font-size="12" fill="#111" font-family="Liberation Sans">124.666</text><path d="M33 405.97H38" stroke="#111" stroke-width="1.3"/><text x="43.5" y="407.57" font-size="12" fill="#111" font-family="Liberation Sans">83.444</text><path d="M33 435.79H38" stroke="#111" stroke-width="1.3"/><text x="43.5" y="437.39" font-size="12" fill="#111" font-family="Liberation Sans">42.222</text><path d="M33 465.60H38" stroke="#111" stroke-width="1.3"/><text x="43.5" y="467.20" font-size="12" fill="#111" font-family="Liberation Sans">1</text></svg>
<svg class="a" style="left:555px;top:805px" width="130" height="130">
<defs>
<linearGradient id="cr" x1="0" y1="0" x2="1" y2="1"><stop offset="0" stop-color="#b5b5b5"/><stop offset="1" stop-color="#9a9a9a"/></linearGradient>
<linearGradient id="cl" x1="0" y1="0" x2="1" y2="1"><stop offset="0" stop-color="#8e8e8e"/><stop offset="1" stop-color="#6e6e6e"/></linearGradient>
</defs>
<path d="M10.7 17.5L19 10.5L27.3 17.5H23.5V26.5H14.5V17.5Z" fill="#000"/>
<rect x="21" y="10" width="1.5" height="4" fill="#000"/>
<text x="67.5" y="21" font-size="12" fill="#111" font-family="Liberation Sans">z</text>
<path d="M73 39V31" stroke="#0000dd" stroke-width="2.2"/><path d="M69.8 33L73 28.5L76.2 33Z" fill="#0000dd"/>
<path d="M73 39L31.9 46.8L59.4 59.4L107.2 48.4Z" fill="#d2d2d2"/>
<path d="M31.9 46.8L59.4 59.4L62.8 115.1L37.4 90.8Z" fill="url(#cl)"/>
<path d="M59.4 59.4L107.2 48.4L104.9 95.5L62.8 115.1Z" fill="url(#cr)"/>
<filter id="bl"><feGaussianBlur stdDeviation="0.6"/></filter>
<path d="M53 53L84 49L85 51L54 55Z M52 51.5L58 51L58.5 55L52.5 55.5Z M76 47.5L84 46.5L84.5 50L76.5 51Z" fill="#333" opacity="0.55" filter="url(#bl)"/>
<text x="0" y="0" font-size="13.5" font-weight="bold" fill="#1a1a1a" font-family="Liberation Sans" filter="url(#bl)" transform="translate(69.5 89.5) skewY(-19) scale(0.82 1)">Pos Y</text>
<text x="0" y="0" font-size="13" font-weight="bold" fill="#1a1a1a" font-family="Liberation Sans" opacity="0.9" filter="url(#bl)" transform="translate(38.5 80.5) skewY(36) scale(0.52 1)">Pos X</text>
<text x="18" y="95" font-size="12" fill="#111" font-family="Liberation Sans">x</text>
<path d="M37 92.5L31 95" stroke="#dd0000" stroke-width="2.2"/><path d="M33 92L28.5 96L34 97Z" fill="#dd0000"/>
<path d="M105 96L110 99" stroke="#00bb00" stroke-width="2.2"/><path d="M108 95.5L113 100.5L107 101.5Z" fill="#00bb00"/>
<text x="113" y="103" font-size="12" fill="#111" font-family="Liberation Sans">y</text>
</svg>
<div class="a" style="left:1842px;top:725.5px;width:48px;height:48px;border-radius:50%;background:#0b76a8;box-shadow:0 1px 10px rgba(0,0,0,0.12)"></div>
<svg class="a" style="left:1842px;top:725.5px" width="48" height="48"><path d="M15 15.5A2.5 2.5 0 0 1 17.5 13H31.5A2.5 2.5 0 0 1 34 15.5V37L29.5 35H17.5A2.5 2.5 0 0 1 15 32.5Z" fill="#fff"/><path d="M18.5 28C22 31 27 31 30.5 28" fill="none" stroke="#0b76a8" stroke-width="1.3"/></svg>
<div class="a" style="left:1901px;top:160px;width:4px;height:789px;background:#f4f4f4;border-left:1px solid #e3e3e3"></div>
<!--/VP-->
<!--END-->
</body></html>
